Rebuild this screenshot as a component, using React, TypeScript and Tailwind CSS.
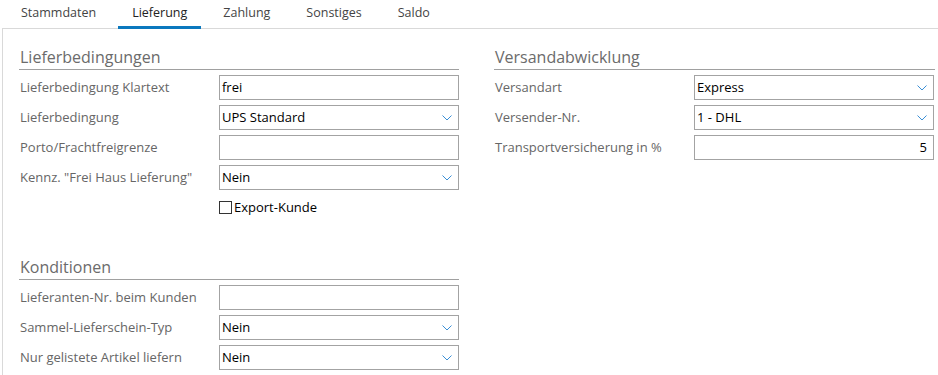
import React from 'react';

const tabs = ['Stammdaten', 'Lieferung', 'Zahlung', 'Sonstiges', 'Saldo'];

const Chevron: React.FC = () => (
  <svg width="10" height="6" viewBox="0 0 10 6" fill="none" className="shrink-0">
    <path d="M0.5 0.5L5 5L9.5 0.5" stroke="#3a8fd6" strokeWidth="1" />
  </svg>
);

const SectionTitle: React.FC<{ title: string }> = ({ title }) => (
  <div className="text-[16px] leading-[20px] text-[#6b6b6b] border-b border-[#a0a0a0] pb-[2px] mb-[5px] pl-px">
    {title}
  </div>
);

interface RowProps {
  label: string;
  value?: string;
  select?: boolean;
  right?: boolean;
}

const Row: React.FC<RowProps> = ({ label, value = '', select, right }) => (
  <div className="flex items-center h-[25px] mb-[5px]">
    <div className="w-[200px] pl-px text-[13px] text-[#666] whitespace-nowrap">{label}</div>
    <div className="w-[240px] h-[25px] border border-[#a3a3a3] bg-white flex items-center pl-[2px] pr-[6px] text-[13px] text-black">
      <span className={right ? 'flex-1 text-right' : 'flex-1'}>{value}</span>
      {select && <Chevron />}
    </div>
  </div>
);

export default function App() {
  return (
    <div className="w-[938px] h-[375px] bg-white overflow-hidden font-['Segoe_UI','Open_Sans',sans-serif]">
      <div className="relative z-10 flex h-[29px] pl-[3px]">
        {tabs.map((t) => (
          <div
            key={t}
            className={`mx-[4px] px-[14px] h-[29px] flex items-center text-[12.5px] border-b-[3px] ${
              t === 'Lieferung' ? 'border-[#0a78be] text-[#222]' : 'border-transparent text-[#444]'
            }`}
          >
            <span className="-mb-[1px]">{t}</span>
          </div>
        ))}
      </div>
      <div className="-mt-px ml-[2px] h-[360px] border-l border-t border-[#d9d9d9] pl-[16px] pt-[18px] flex gap-[35px]">
        <div className="w-[440px]">
          <SectionTitle title="Lieferbedingungen" />
          <Row label="Lieferbedingung Klartext" value="frei" />
          <Row label="Lieferbedingung" value="UPS Standard" select />
          <Row label="Porto/Frachtfreigrenze" />
          <Row label="Kennz. &quot;Frei Haus Lieferung&quot;" value="Nein" select />
          <div className="flex items-center h-[25px] pl-[200px] mt-[2px]">
            <span className="w-[13px] h-[13px] border border-[#333] bg-white mr-[2px]" />
            <span className="text-[13px] text-black">Export-Kunde</span>
          </div>
          <div className="h-[37px]" />
          <SectionTitle title="Konditionen" />
          <Row label="Lieferanten-Nr. beim Kunden" />
          <Row label="Sammel-Lieferschein-Typ" value="Nein" select />
          <Row label="Nur gelistete Artikel liefern" value="Nein" select />
        </div>
        <div className="w-[441px]">
          <SectionTitle title="Versandabwicklung" />
          <Row label="Versandart" value="Express" select />
          <Row label="Versender-Nr." value="1 - DHL" select />
          <Row label="Transportversicherung in %" value="5" right />
        </div>
      </div>
    </div>
  );
}
